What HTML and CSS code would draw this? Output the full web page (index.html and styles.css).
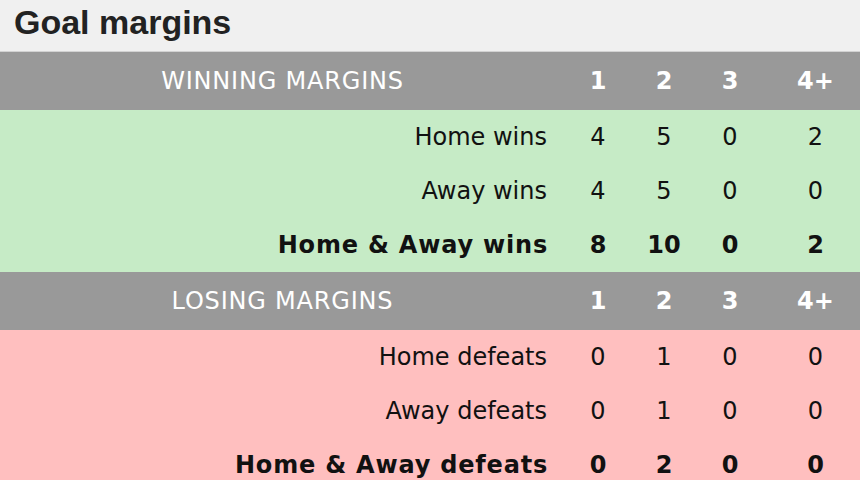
FILE: index.html
```html
<!DOCTYPE html>
<html>
<head>
<meta charset="utf-8">
<link rel="stylesheet" href="styles.css">
</head>
<body>
<div class="page">
  <h1 class="title">Goal margins</h1>
  <table class="margins">
    <colgroup>
      <col class="c-label"><col class="c-num"><col class="c-num"><col class="c-num"><col class="c-last">
    </colgroup>
    <tr class="head">
      <th class="label-head">WINNING MARGINS</th><th>1</th><th>2</th><th>3</th><th class="last">4+</th>
    </tr>
    <tr class="win">
      <td class="label">Home wins</td><td>4</td><td>5</td><td>0</td><td class="last">2</td>
    </tr>
    <tr class="win">
      <td class="label">Away wins</td><td>4</td><td>5</td><td>0</td><td class="last">0</td>
    </tr>
    <tr class="win total">
      <td class="label">Home &amp; Away wins</td><td>8</td><td>10</td><td>0</td><td class="last">2</td>
    </tr>
    <tr class="head">
      <th class="label-head">LOSING MARGINS</th><th>1</th><th>2</th><th>3</th><th class="last">4+</th>
    </tr>
    <tr class="loss">
      <td class="label">Home defeats</td><td>0</td><td>1</td><td>0</td><td class="last">0</td>
    </tr>
    <tr class="loss">
      <td class="label">Away defeats</td><td>0</td><td>1</td><td>0</td><td class="last">0</td>
    </tr>
    <tr class="loss total">
      <td class="label">Home &amp; Away defeats</td><td>0</td><td>2</td><td>0</td><td class="last">0</td>
    </tr>
  </table>
</div>
</body>
</html>
```

FILE: styles.css
```css
html, body {
  margin: 0;
  padding: 0;
  background: #f0f0f0;
  overflow: hidden;
}
.page {
  width: 860px;
}
.title {
  margin: 0;
  height: 51px;
  padding-left: 14px;
  font-family: "Liberation Sans", Arial, sans-serif;
  font-weight: bold;
  font-size: 34px;
  line-height: 44px;
  color: #222;
  border-bottom: 1px solid #d2d2d2;
}
.margins {
  width: 860px;
  border-collapse: collapse;
  table-layout: fixed;
  font-family: "DejaVu Sans", Tahoma, Verdana, sans-serif;
  font-size: 24px;
  color: #111;
}
.c-label { width: 565px; }
.c-num { width: 66px; }
.c-last { width: 97px; }
.margins th, .margins td {
  padding: 0;
  text-align: center;
}
.margins .last {
  padding-left: 8px;
}
.head {
  background: #999999;
  color: #fff;
  height: 58px;
}
.head th {
  font-weight: bold;
}
.head .label-head {
  font-weight: normal;
  letter-spacing: 0.8px;
}
.win { background: #c6ebc6; height: 54px; }
.loss { background: #ffbfbf; height: 54px; }
.margins td.label {
  text-align: right;
  padding-right: 18px;
}
.total td {
  font-weight: bold;
}
.total td.label {
  letter-spacing: 0.8px;
  padding-right: 17px;
}
```
